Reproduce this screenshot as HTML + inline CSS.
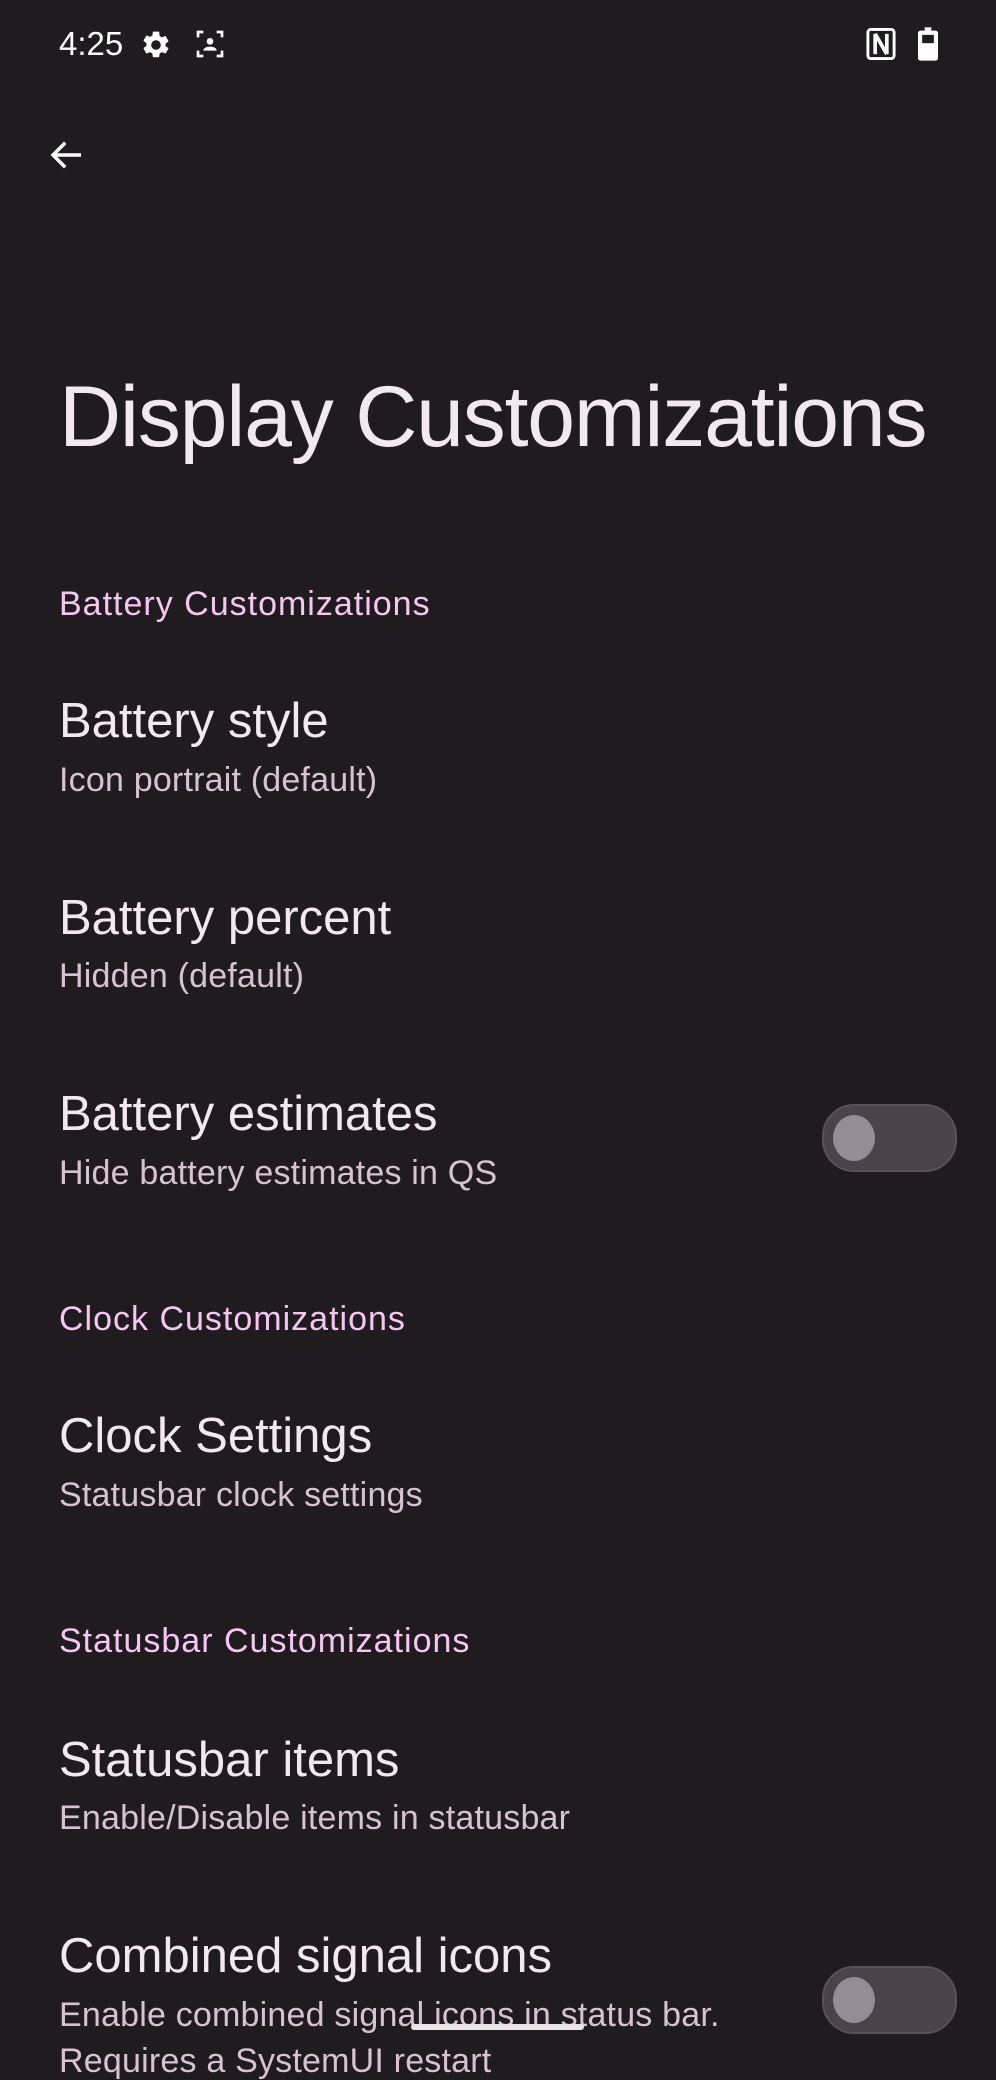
<!DOCTYPE html>
<html><head><meta charset="utf-8"><style>
html,body{margin:0;padding:0;}
body{width:996px;height:2048px;background:#201b1f;position:relative;overflow:hidden;font-family:"Liberation Sans",sans-serif;}
.t{position:absolute;left:59px;white-space:nowrap;line-height:1;}
.h{color:#f6c6f2;font-size:34px;letter-spacing:1px;}
.ti{color:#f2e8f0;font-size:49px;}
.su{color:#d6c3d1;font-size:34px;letter-spacing:0.2px;}
.tog{position:absolute;left:822px;width:131px;height:64px;border-radius:32px;background:#4a434a;border:2px solid #585158;}
.tog::after{content:"";position:absolute;left:9px;top:9px;width:42px;height:46px;border-radius:50%;background:#958c95;}
</style></head><body>
<div class="t" style="top:27px;color:#fff;font-size:33px;">4:25</div>
<svg style="position:absolute;left:140px;top:29px" width="32" height="32" viewBox="0 0 24 24"><path fill="#fff" d="M19.14 12.94c.04-.3.06-.61.06-.94s-.02-.64-.07-.94l2.03-1.58a.5.5 0 0 0 .12-.61l-1.920-3.32a.5.5 0 0 0-.59-.22l-2.39.96a7 7 0 0 0-1.62-.94l-.36-2.540A.48.48 0 0 0 13.92 2h-3.84a.48.48 0 0 0-.47.41l-.36 2.54c-.59.24-1.130.56-1.62.94l-2.39-.96a.5.5 0 0 0-.59.22L2.74 8.47a.5.5 0 0 0 .12.61l2.03 1.58c-.05.3-.09.63-.09.94s.02.64.07.94l-2.03 1.58a.5.5 0 0 0-.12.61l1.92 3.32c.12.22.37.29.59.22l2.39-.96c.5.38 1.03.7 1.62.94l.36 2.54c.05.24.24.41.48.41h3.84c.24 0 .44-.17.47-.41l.36-2.54c.59-.24 1.13-.56 1.62-.94l2.39.96c.22.08.47 0 .59-.22l1.92-3.32a.5.5 0 0 0-.12-.61zM12 15.6A3.6 3.6 0 1 1 12 8.4a3.6 3.6 0 0 1 0 7.2z"/></svg>
<svg style="position:absolute;left:194px;top:28px" width="32" height="32" viewBox="0 0 24 24" fill="none" stroke="#fff" stroke-width="2"><path d="M3 7V3h4M17 3h4v4M21 17v4h-4M7 21H3v-4"/><circle cx="12" cy="10" r="2.5" fill="#fff" stroke="none"/><path d="M7 17c0-2 2.5-3 5-3s5 1 5 3z" fill="#fff" stroke="none"/></svg>
<svg style="position:absolute;left:866px;top:28px" width="30" height="32" viewBox="0 0 20 22"><rect x="1" y="1" width="18" height="20" rx="2" fill="none" stroke="#fff" stroke-width="2"/><path d="M6 4v14M14 4v14M6 4l8 14" stroke="#fff" stroke-width="2.5" fill="none"/></svg>
<svg style="position:absolute;left:918px;top:27px" width="20" height="34" viewBox="0 0 12 20"><rect x="4" y="0" width="4" height="2" fill="#fff"/><rect x="0" y="2" width="12" height="18" rx="1.5" fill="#fff"/><rect x="2.5" y="4.5" width="7" height="5" fill="#201b1f"/></svg>
<svg style="position:absolute;left:46px;top:134px" width="42" height="42" viewBox="0 0 24 24"><path d="M20 12H4M11 5l-7 7 7 7" stroke="#fff" stroke-width="2" fill="none"/></svg>
<div class="t" style="top:374px;color:#f2e8f0;font-size:86px;letter-spacing:-1.2px;">Display Customizations</div>
<div class="h t" style="top:587px;">Battery Customizations</div>
<div class="ti t" style="top:697px;">Battery style</div>
<div class="su t" style="top:763px;">Icon portrait (default)</div>
<div class="ti t" style="top:894px;">Battery percent</div>
<div class="su t" style="top:959px;">Hidden (default)</div>
<div class="ti t" style="top:1090px;">Battery estimates</div>
<div class="su t" style="top:1156px;">Hide battery estimates in QS</div>
<div class="tog" style="top:1104px;"></div>
<div class="h t" style="top:1302px;">Clock Customizations</div>
<div class="ti t" style="top:1412px;">Clock Settings</div>
<div class="su t" style="top:1478px;">Statusbar clock settings</div>
<div class="h t" style="top:1624px;">Statusbar Customizations</div>
<div class="ti t" style="top:1736px;">Statusbar items</div>
<div class="su t" style="top:1801px;">Enable/Disable items in statusbar</div>
<div class="ti t" style="top:1932px;">Combined signal icons</div>
<div class="su t" style="top:1998px;">Enable combined signal icons in status bar.</div>
<div class="su t" style="top:2044px;">Requires a SystemUI restart</div>
<div class="tog" style="top:1966px;"></div>
<div style="position:absolute;left:411px;top:2024px;width:173px;height:6px;border-radius:3px;background:#e8e4e8;"></div>
</body></html>
